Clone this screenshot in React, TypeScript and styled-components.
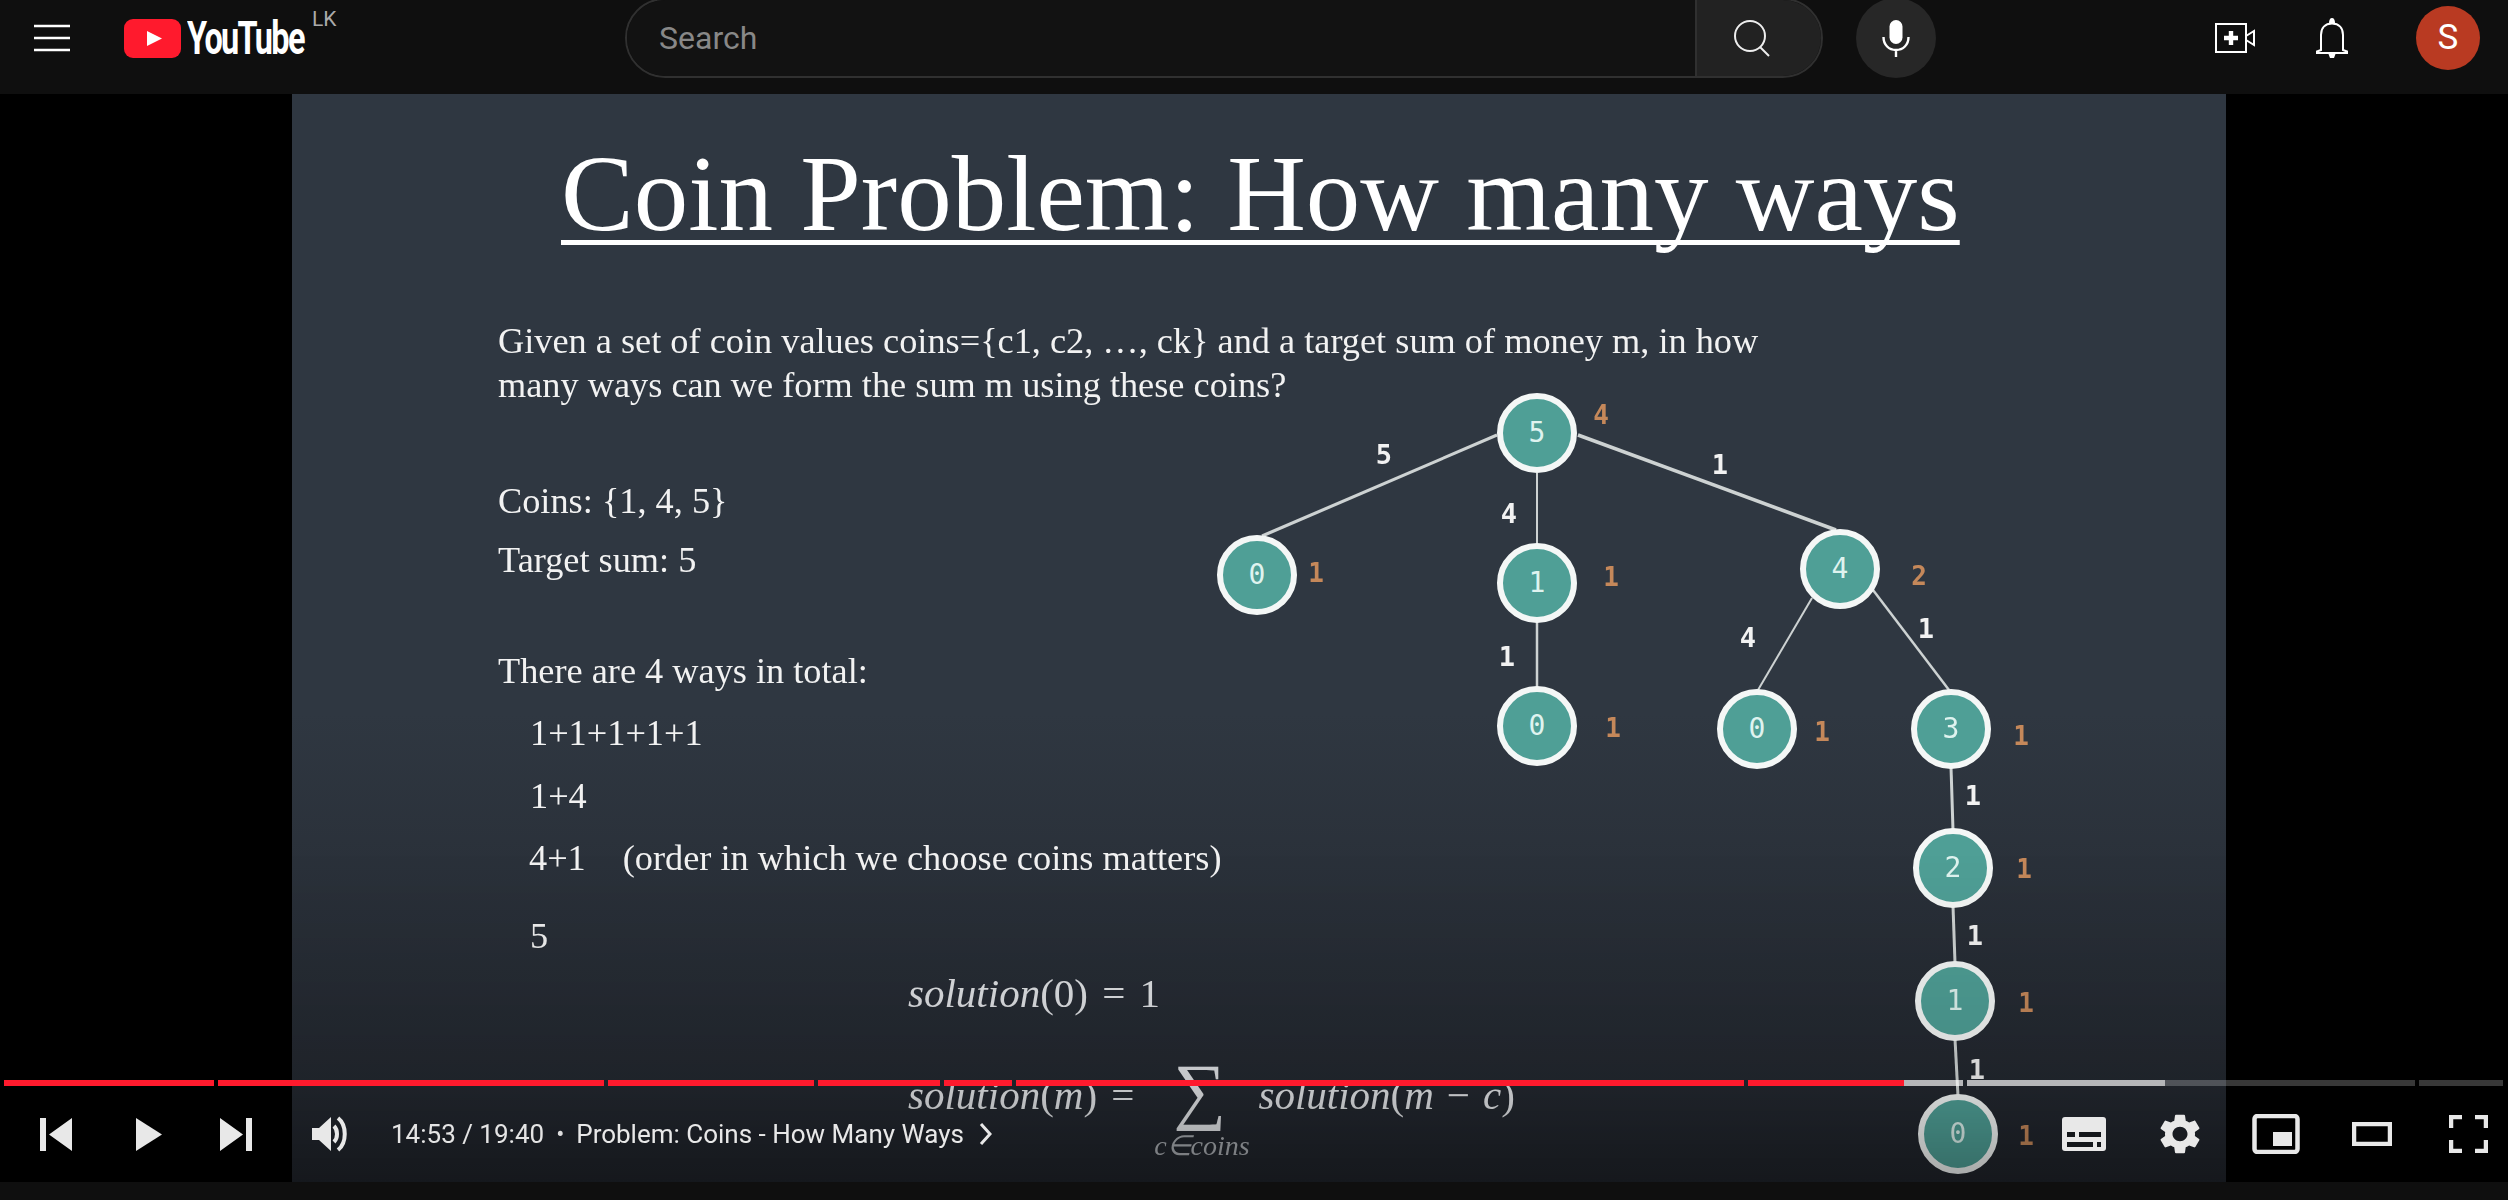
import React from 'react';
import styled, { createGlobalStyle } from 'styled-components';

const Global = createGlobalStyle`
  html, body { margin: 0; padding: 0; background: #0f0f0f; }
  body { width: 2508px; height: 1200px; overflow: hidden; font-family: Roboto, "Liberation Sans", sans-serif; }
  * { box-sizing: border-box; }
`;

const VIDEO_X = 292;
const VIDEO_Y = 94;

const Page = styled.div`
  width: 2508px;
  height: 1200px;
  display: flex;
  flex-direction: column;
  background: #0f0f0f;
  overflow: hidden;
`;

const Header = styled.header`
  height: 94px;
  flex: none;
  display: flex;
  align-items: center;
  padding: 0 28px 18px 34px;
  background: #0f0f0f;
`;
const Brand = styled.div`
  width: 591px;
  display: flex;
  align-items: center;
  flex: none;
`;
const LogoLink = styled.div`
  position: relative;
  margin-left: 54px;
  display: flex;
  align-items: center;
  height: 40px;
`;
const Wordmark = styled.span`
  display: block;
  width: 118px;
  margin-left: 6px;
  font: 700 47px/40px Roboto, sans-serif;
  color: #fff;
  letter-spacing: -2.4px;
  transform: scaleX(0.69);
  transform-origin: left center;
  white-space: nowrap;
`;
const Region = styled.sup`
  position: absolute;
  left: 188px;
  top: -9px;
  font: 400 21px/20px Roboto, sans-serif;
  color: #aaa;
`;
const SearchBox = styled.div`
  width: 1198px;
  height: 80px;
  flex: none;
  display: flex;
  border: 2px solid #303030;
  border-radius: 40px;
  overflow: hidden;
`;
const SearchField = styled.div`
  flex: 1;
  display: flex;
  align-items: center;
  padding-left: 32px;
  color: #888;
  font: 400 32px Roboto, sans-serif;
  background: #121212;
`;
const SearchButton = styled.div`
  width: 126px;
  display: flex;
  align-items: center;
  justify-content: center;
  background: #222;
  border-left: 2px solid #303030;
  padding-right: 14px;
`;
const MicButton = styled.div`
  width: 80px;
  height: 80px;
  flex: none;
  margin-left: 33px;
  border-radius: 50%;
  background: #272727;
  display: flex;
  align-items: center;
  justify-content: center;
`;
const HeaderActions = styled.div`
  margin-left: auto;
  display: flex;
  align-items: center;
`;
const BellWrap = styled.div`
  margin: 0 68px 0 61px;
  display: flex;
`;
const Avatar = styled.div`
  width: 64px;
  height: 64px;
  border-radius: 50%;
  background: #b93a22;
  color: #fff;
  font: 400 35px/64px Roboto, sans-serif;
  text-align: center;
`;

const Player = styled.main`
  position: relative;
  height: 1088px;
  flex: none;
  background: #000;
  overflow: hidden;
  padding-left: ${VIDEO_X}px;
`;
const Slide = styled.section`
  position: relative;
  width: 1934px;
  height: 1088px;
  background: linear-gradient(to bottom, #2f3741 0, #2f3741 620px, #20242b 1088px);
  padding-top: 35px;
  overflow: hidden;
  color: #f2f2f2;
  font-family: "Liberation Serif", serif;
`;
const SlideText = styled.div`
  filter: blur(0.55px);
`;
const Title = styled.h1`
  margin: 0;
  padding-left: 269px;
  font: 400 109px/130px "Liberation Serif", serif;
  color: #fff;
  white-space: nowrap;
  text-decoration: underline;
  text-decoration-thickness: 5px;
  text-underline-offset: 10px;
  text-decoration-skip-ink: none;
`;
const Line = styled.p<{ $mt: number; $ml?: number }>`
  margin: ${(p) => p.$mt}px 0 0 ${(p) => p.$ml ?? 206}px;
  font-size: 36.3px;
  line-height: 44px;
  white-space: nowrap;
`;
const Note = styled.span`
  margin-left: 37px;
`;
const MathLine = styled.div<{ $mt: number }>`
  margin: ${(p) => p.$mt}px 0 0 616px;
  display: flex;
  height: 44px;
  font-size: 41px;
  line-height: 44px;
  word-spacing: 4px;
  white-space: pre;
  color: #e0e2e5;
`;
const Var = styled.i``;
const Minus = styled.span`
  margin: 0 13px;
`;
const SumSlot = styled.span`
  position: relative;
  width: 119px;
  margin-left: 5px;
  flex: none;
`;
const SumGlyph = styled.span`
  position: absolute;
  left: 34px;
  top: -33px;
  font: 400 74px/100px "Liberation Serif", serif;
`;
const SumSub = styled.i`
  position: absolute;
  left: -6px;
  top: 58px;
  width: 137px;
  text-align: center;
  font-size: 28px;
  line-height: 30px;
  word-spacing: 0;
  color: #a8acb1;
`;

const TreeCanvas = styled.div`
  position: absolute;
  inset: 0;
  filter: blur(0.5px);
`;
const TreeEdges = styled.svg`
  position: absolute;
  inset: 0;
`;
const TreeNode = styled.div<{ $x: number; $y: number }>`
  position: absolute;
  left: ${(p) => p.$x - VIDEO_X - 40}px;
  top: ${(p) => p.$y - VIDEO_Y - 40}px;
  width: 80px;
  height: 80px;
  border-radius: 50%;
  background: #4f9f96;
  border: 6px solid #f4f7f6;
  color: #dff3ef;
  font: 400 28px/68px "DejaVu Sans Mono", monospace;
  text-align: center;
`;
const TreeLabel = styled.span<{ $x: number; $y: number; $count?: boolean }>`
  position: absolute;
  left: ${(p) => p.$x - VIDEO_X - 20}px;
  top: ${(p) => p.$y - VIDEO_Y - 20}px;
  width: 40px;
  text-align: center;
  font: 700 ${(p) => (p.$count ? 26 : 27)}px/40px "DejaVu Sans Mono", monospace;
  color: ${(p) => (p.$count ? '#c5885a' : '#f2f2f2')};
`;

const BottomShade = styled.div`
  position: absolute;
  left: 0;
  right: 0;
  bottom: 0;
  height: 330px;
  background: linear-gradient(to bottom, rgba(0, 0, 0, 0), rgba(0, 0, 0, 0.12) 70%, rgba(0, 0, 0, 0.32));
`;

const Controls = styled.div`
  position: absolute;
  left: 0;
  right: 0;
  top: 986px;
  height: 102px;
  display: flex;
  flex-direction: column;
`;
const Progress = styled.div`
  height: 6px;
  flex: none;
  padding: 0 4px;
  display: flex;
  gap: 4px;
`;
const Chapter = styled.div<{ $w: number }>`
  width: ${(p) => p.$w}px;
  height: 6px;
  display: flex;
  background: rgba(255, 255, 255, 0.22);
`;
const Played = styled.div<{ $w: number }>`
  width: ${(p) => p.$w}px;
  background: #ff1a2d;
`;
const Buffered = styled.div<{ $w: number }>`
  width: ${(p) => p.$w}px;
  background: rgba(255, 255, 255, 0.58);
`;
const Bar = styled.div`
  flex: 1;
  display: flex;
  align-items: center;
  padding: 0 20px 0 40px;
  color: #e2e2e2;
`;
const Ctl = styled.div<{ $ml?: number }>`
  display: flex;
  flex: none;
  margin-left: ${(p) => p.$ml ?? 0}px;
`;
const TimeText = styled.span`
  margin-left: 42px;
  font: 400 26px/30px Roboto, sans-serif;
  color: #e4e4e4;
  white-space: nowrap;
`;
const Sep = styled.span`
  margin: 0 12px 0 12px;
  font: 400 24px/30px Roboto, sans-serif;
  color: #ddd;
`;
const ChapterName = styled.span`
  font: 400 26px/30px Roboto, sans-serif;
  color: #e8e8e8;
  white-space: nowrap;
`;
const ChevronWrap = styled.span`
  margin-left: 15px;
  display: flex;
`;
const RightControls = styled.div`
  margin-left: auto;
  display: flex;
  align-items: center;
`;

const edges: [number, number, number, number, number][] = [
  [1497, 435, 1262, 536, 3],
  [1537, 473, 1537, 545, 2],
  [1578, 435, 1836, 530, 3.5],
  [1537, 622, 1537, 688, 2.5],
  [1812, 598, 1758, 690, 2],
  [1873, 590, 1949, 690, 2.5],
  [1951, 767, 1953, 830, 3],
  [1953, 906, 1955, 963, 3],
  [1955, 1039, 1958, 1096, 3],
];
const nodes: [number, number, string][] = [
  [1537, 433, '5'],
  [1257, 575, '0'],
  [1537, 583, '1'],
  [1840, 569, '4'],
  [1537, 726, '0'],
  [1757, 729, '0'],
  [1951, 729, '3'],
  [1953, 868, '2'],
  [1955, 1001, '1'],
  [1958, 1134, '0'],
];
const edgeLabels: [number, number, string][] = [
  [1384, 455, '5'],
  [1509, 514, '4'],
  [1720, 465, '1'],
  [1748, 638, '4'],
  [1507, 657, '1'],
  [1926, 629, '1'],
  [1973, 796, '1'],
  [1975, 936, '1'],
  [1977, 1070, '1'],
];
const counts: [number, number, string][] = [
  [1601, 415, '4'],
  [1316, 573, '1'],
  [1611, 577, '1'],
  [1919, 576, '2'],
  [1613, 728, '1'],
  [1822, 732, '1'],
  [2021, 736, '1'],
  [2024, 869, '1'],
  [2026, 1003, '1'],
  [2026, 1136, '1'],
];
const chapters: [number, number, number][] = [
  [210, 210, 0],
  [386, 386, 0],
  [206, 206, 0],
  [122, 122, 0],
  [68, 68, 0],
  [728, 728, 0],
  [215, 156, 59],
  [448, 0, 198],
  [84, 0, 0],
];

const W = '#e8e8e8';

export default function App() {
  return (
    <Page>
      <Global />
      <Header>
        <Brand>
          <svg width="36" height="28" viewBox="0 0 36 28">
            <path d="M0 2h36M0 14h36M0 26h36" stroke="#fff" strokeWidth="2.4" />
          </svg>
          <LogoLink>
            <svg width="57" height="39" viewBox="0 0 57 39">
              <rect width="57" height="39" rx="9" fill="#ff1a2d" />
              <path d="M23 12l15 7.500L23 27z" fill="#fff" />
            </svg>
            <Wordmark>YouTube</Wordmark>
            <Region>LK</Region>
          </LogoLink>
        </Brand>
        <SearchBox>
          <SearchField>Search</SearchField>
          <SearchButton>
            <svg width="37" height="37" viewBox="0 0 37 37" fill="none" stroke="#eee" strokeWidth="2">
              <circle cx="16" cy="16" r="15" />
              <path d="M26 27l9 9" />
            </svg>
          </SearchButton>
        </SearchBox>
        <MicButton>
          <svg width="28" height="38" viewBox="0 0 28 38" fill="none">
            <rect x="7.500" y="1" width="13" height="24" rx="6.500" fill="#fff" />
            <path d="M1.500 18c0 8 5.500 13 12.500 13s12.500-5 12.500-13M14 31v7" stroke="#fff" strokeWidth="2.400" />
          </svg>
        </MicButton>
        <HeaderActions>
          <svg width="40" height="30" viewBox="0 0 40 30" fill="none" stroke="#fff">
            <rect x="1" y="1" width="30" height="28" strokeWidth="2" />
            <path d="M16 8v14M9 15h14" strokeWidth="4.400" />
            <path d="M31 13l8-5v14l-8-5" strokeWidth="2" />
          </svg>
          <BellWrap>
            <svg width="32" height="40" viewBox="0 0 32 40" fill="none">
              <path d="M5 32V17C5 10 9 5.500 16 5.500S27 10 27 17v15l4 1.500V35H1v-1.500z" stroke="#fff" strokeWidth="2" />
              <path d="M16 0c2 0 3 2 3 5h-6c0-3 1-5 3-5zM12.500 36h7l-1.500 4h-4z" fill="#fff" />
            </svg>
          </BellWrap>
          <Avatar>S</Avatar>
        </HeaderActions>
      </Header>

      <Player>
        <Slide>
          <SlideText>
            <Title>Coin Problem: How many ways</Title>
            <Line $mt={60}>
              Given a set of coin values coins={'{'}c1, c2, …, ck{'}'} and a target sum of money m, in how
            </Line>
            <Line $mt={0}>many ways can we form the sum m using these coins?</Line>
            <Line $mt={72}>Coins: {'{'}1, 4, 5{'}'}</Line>
            <Line $mt={15}>Target sum: 5</Line>
            <Line $mt={67}>There are 4 ways in total:</Line>
            <Line $mt={18} $ml={238}>1+1+1+1+1</Line>
            <Line $mt={19} $ml={238}>1+4</Line>
            <Line $mt={18} $ml={237}>
              4+1<Note>(order in which we choose coins matters)</Note>
            </Line>
            <Line $mt={34} $ml={238}>5</Line>
            <MathLine $mt={13}>
              <Var>solution</Var>(0) = 1
            </MathLine>
            <MathLine $mt={58}>
              <Var>solution</Var>(<Var>m</Var>) =
              <SumSlot>
                <SumGlyph>∑</SumGlyph>
                <SumSub>c∈coins</SumSub>
              </SumSlot>
              <Var>solution</Var>(<Var>m</Var><Minus>−</Minus><Var>c</Var>)
            </MathLine>
          </SlideText>
          <TreeCanvas>
            <TreeEdges width="1934" height="1088">
              {edges.map(([a, b, c, d, w], i) => (
                <line
                  key={i}
                  x1={a - VIDEO_X}
                  y1={b - VIDEO_Y}
                  x2={c - VIDEO_X}
                  y2={d - VIDEO_Y}
                  stroke="#cdd2d2"
                  strokeWidth={w}
                />
              ))}
            </TreeEdges>
            {nodes.map(([x, y, t], i) => (
              <TreeNode key={i} $x={x} $y={y}>{t}</TreeNode>
            ))}
            {edgeLabels.map(([x, y, t], i) => (
              <TreeLabel key={i} $x={x} $y={y}>{t}</TreeLabel>
            ))}
            {counts.map(([x, y, t], i) => (
              <TreeLabel key={i} $x={x} $y={y} $count>{t}</TreeLabel>
            ))}
          </TreeCanvas>
        </Slide>
        <BottomShade />
        <Controls>
          <Progress>
            {chapters.map(([w, red, buf], i) => (
              <Chapter key={i} $w={w}>
                {red > 0 && <Played $w={red} />}
                {buf > 0 && <Buffered $w={buf} />}
              </Chapter>
            ))}
          </Progress>
          <Bar>
            <Ctl>
              <svg width="32" height="33" viewBox="0 0 32 33" fill={W}>
                <path d="M0 0h6v33H0zM32 0v33L9 16.500z" />
              </svg>
            </Ctl>
            <Ctl $ml={64}>
              <svg width="26" height="33" viewBox="0 0 26 33" fill={W}>
                <path d="M0 0l26 16.500L0 33z" />
              </svg>
            </Ctl>
            <Ctl $ml={58}>
              <svg width="32" height="33" viewBox="0 0 32 33" fill={W}>
                <path d="M0 0l23 16.500L0 33zM26 0h6v33h-6z" />
              </svg>
            </Ctl>
            <Ctl $ml={60}>
              <svg width="37" height="36" viewBox="0 0 37 36" fill="none">
                <path d="M0 12h7l12-11v34L7 24H0z" fill={W} />
                <path d="M22 10c4 4 4 12 0 16M26 2c9 7 9 25 0 32" stroke={W} strokeWidth="4" />
              </svg>
            </Ctl>
            <TimeText>14:53 / 19:40</TimeText>
            <Sep>•</Sep>
            <ChapterName>Problem: Coins - How Many Ways</ChapterName>
            <ChevronWrap>
              <svg width="13" height="22" viewBox="0 0 13 22" fill="none">
                <path d="M2 1l9 10-9 10" stroke={W} strokeWidth="3" />
              </svg>
            </ChevronWrap>
            <RightControls>
              <Ctl>
                <svg width="44" height="34" viewBox="0 0 44 34">
                  <rect width="44" height="34" rx="3" fill={W} />
                  <path d="M5 15h8v5H5zM17 15h22v5H17zM5 25h26v5H5zM35 25h4v5h-4z" fill="#14171b" />
                </svg>
              </Ctl>
              <Ctl $ml={54}>
                <svg width="40" height="40" viewBox="2.400 2 19.200 20" preserveAspectRatio="none" fill={W}>
                  <path d="M19.140 12.940c.04-.3.060-.61.060-.94 0-.32-.02-.64-.07-.94l2.030-1.580c.18-.14.230-.41.120-.61l-1.920-3.320c-.12-.22-.37-.29-.59-.22l-2.390.96c-.5-.38-1.030-.7-1.620-.94l-.36-2.540c-.04-.24-.24-.41-.48-.41h-3.840c-.24 0-.43.170-.47.410l-.36 2.540c-.59.240-1.130.570-1.620.940l-2.390-.96c-.22-.08-.47 0-.59.220L2.740 8.870c-.12.210-.08.470.120.610l2.030 1.580c-.05.3-.09.630-.09.940s.020.640.070.940l-2.030 1.580c-.18.140-.23.410-.12.610l1.920 3.320c.12.220.370.290.590.220l2.390-.96c.5.380 1.030.7 1.620.940l.36 2.540c.05.240.240.410.480.410h3.840c.24 0 .44-.17.470-.41l.36-2.540c.59-.24 1.130-.56 1.620-.94l2.390.96c.22.080.47 0 .59-.22l1.920-3.320c.12-.22.070-.47-.12-.61l-2.010-1.580zM12 15.600c-1.980 0-3.600-1.620-3.600-3.600s1.620-3.600 3.600-3.600 3.600 1.620 3.600 3.600-1.620 3.600-3.600 3.600z" />
                </svg>
              </Ctl>
              <Ctl $ml={52}>
                <svg width="48" height="40" viewBox="0 0 48 40" fill="none">
                  <rect x="2.500" y="2" width="43" height="36" rx="3" stroke={W} strokeWidth="4.500" />
                  <rect x="21" y="18" width="19" height="14" fill={W} />
                </svg>
              </Ctl>
              <Ctl $ml={52}>
                <svg width="40" height="24" viewBox="0 0 40 24" fill="none">
                  <rect x="2" y="2" width="36" height="20" stroke={W} strokeWidth="4.500" />
                </svg>
              </Ctl>
              <Ctl $ml={57}>
                <svg width="39" height="38" viewBox="0 0 39 38" fill="none" stroke={W} strokeWidth="4.500">
                  <path d="M2 13V2h11M26 2h11v11M37 25v11H26M13 36H2V25" />
                </svg>
              </Ctl>
            </RightControls>
          </Bar>
        </Controls>
      </Player>
    </Page>
  );
}
